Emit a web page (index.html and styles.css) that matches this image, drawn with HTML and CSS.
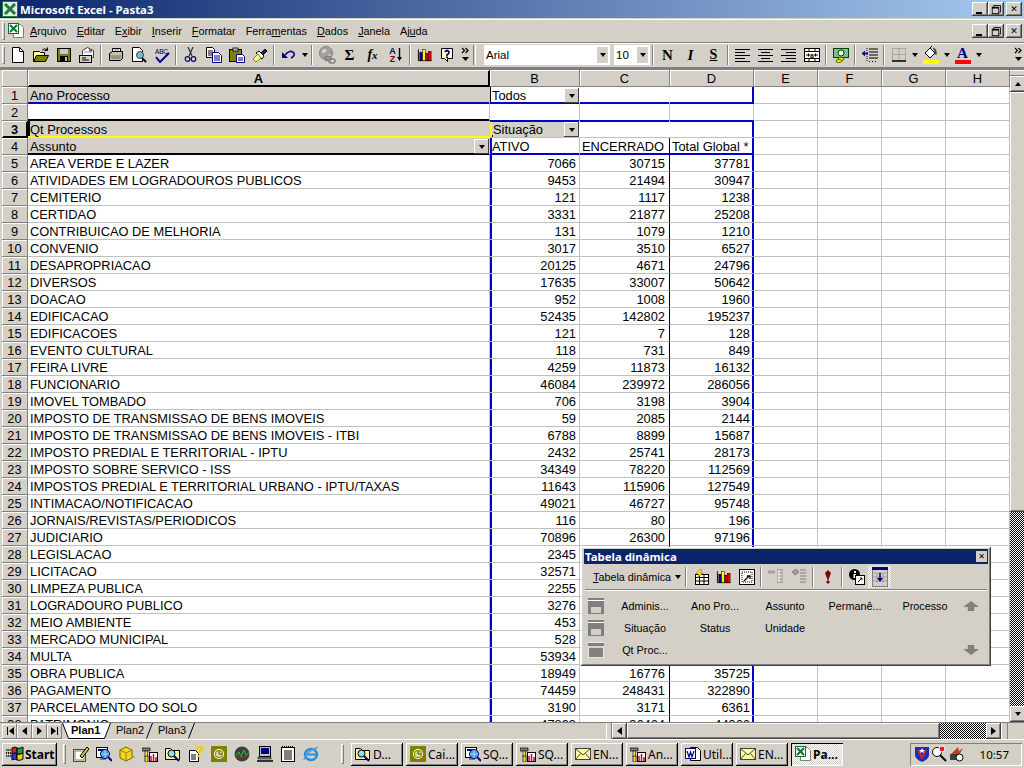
FILE: index.html
```html
<!DOCTYPE html>
<html lang="pt">
<head>
<meta charset="utf-8">
<title>Microsoft Excel - Pasta3</title>
<link rel="stylesheet" href="styles.css">
</head>
<body>
<svg class="sprite" aria-hidden="true">
<defs>
<symbol id="xl" viewBox="0 0 16 16"><rect width="16" height="16" fill="#1c7c3c"/><rect x="1" y="1" width="14" height="14" fill="#dfeee3"/><path d="M3 3l10 10M13 3L3 13" stroke="#1c7c3c" stroke-width="3"/></symbol>
<symbol id="xldoc" viewBox="0 0 16 16"><path d="M5.500 1.500h7l3 3v10h-10z" fill="#fff" stroke="#808080"/><rect x=".5" y=".5" width="10" height="10" fill="#fff" stroke="#107030"/><path d="M2 2l7 7M9 2L2 9" stroke="#107030" stroke-width="2"/></symbol>
<symbol id="new" viewBox="0 0 16 16"><path d="M2.500 .5h7l4 4v11h-11z" fill="#fff" stroke="#000"/><path d="M9.500 .5v4h4" fill="none" stroke="#000"/></symbol>
<symbol id="open" viewBox="0 0 16 16"><path d="M.5 4.500h6l1 1h4v9H.5z" fill="#ffff9c" stroke="#000"/><path d="M3.500 8.500h12l-3 6H.5z" fill="#808000" stroke="#000"/><path d="M9 3.500q2-3 5-1M14.500 .5v3h-3" fill="none" stroke="#000"/></symbol>
<symbol id="save" viewBox="0 0 16 16"><rect x="1.500" y="1.500" width="13" height="13" fill="#808000" stroke="#000"/><rect x="4" y="2" width="8" height="5" fill="#c8c8c8"/><rect x="4" y="9" width="8" height="5" fill="#000"/><rect x="9" y="10" width="2" height="4" fill="#c0c0c0"/></symbol>
<symbol id="mail" viewBox="0 0 16 16"><path d="M3.500 7.500v-4l5-3 6 3v7h-11z" fill="#fff" stroke="#404040"/><path d="M10 3.500h3" stroke="#e02020" stroke-width="2"/><path d="M5 5h8" stroke="#8080ff"/><rect x=".5" y="8.500" width="12" height="7" fill="#d4d0c8" stroke="#000"/><path d="M3 11h4M3 13h7" stroke="#000"/></symbol>
<symbol id="print" viewBox="0 0 16 16"><path d="M4.500 1.500h8v4h-8z" fill="#fff" stroke="#000"/><path d="M1.500 6.500l3-2h10v7l-2 2H1.500z" fill="#c0c0c0" stroke="#000"/><path d="M2 9h11" stroke="#808000"/><path d="M3 11h10" stroke="#606060"/><path d="M6 3h5" stroke="#808080"/></symbol>
<symbol id="prev" viewBox="0 0 16 16"><path d="M1.500 .5h7l3 3v11h-10z" fill="#fff" stroke="#000"/><circle cx="9" cy="8" r="3.500" fill="#70c0d0" stroke="#404040"/><path d="M11 11l4 4" stroke="#000" stroke-width="2"/></symbol>
<symbol id="spell" viewBox="0 0 16 16"><text x="1" y="6.500" class="svgt">ABC</text><path d="M2 10l4 5 9-9" fill="none" stroke="#000080" stroke-width="2"/></symbol>
<symbol id="cut" viewBox="0 0 16 16"><path d="M5 0l4 9M10 0L6 9" stroke="#202020" stroke-width="1.100"/><circle cx="4.500" cy="12" r="2.300" fill="none" stroke="#000080" stroke-width="1.200"/><circle cx="10.500" cy="12" r="2.300" fill="none" stroke="#000080" stroke-width="1.200"/></symbol>
<symbol id="copy" viewBox="0 0 16 16"><path d="M.5 .5h6l2 2v8h-8z" fill="#fff" stroke="#000"/><path d="M2 4h5M2 6h5M2 8h5" stroke="#000"/><path d="M6.500 5.500h6l3 3v7h-9z" fill="#fff" stroke="#000080"/><path d="M8 9h6M8 11h6M8 13h6" stroke="#000080"/></symbol>
<symbol id="paste" viewBox="0 0 16 16"><rect x=".5" y="2.500" width="12" height="12" fill="#808000" stroke="#000"/><rect x="4" y="1" width="5" height="3" fill="#c0c0c0" stroke="#000" stroke-width=".8"/><path d="M7.500 7.500h6l2 2v6h-8z" fill="#fff" stroke="#000080"/><path d="M9 11h5M9 13h5" stroke="#000080"/></symbol>
<symbol id="paint" viewBox="0 0 16 16"><path d="M9 6l4-4 2 2-4 4z" fill="#202060" stroke="#000"/><path d="M4 6l3-2 5 5-2 3z" fill="#fff" stroke="#000"/><path d="M6 7l-5 5 3 3 5-4z" fill="#ffffa0" stroke="#808000"/></symbol>
<symbol id="undo" viewBox="0 0 16 16"><path d="M4 8q5-6 9-2 1 3-3 5" fill="none" stroke="#000080" stroke-width="1.600"/><path d="M1 5l0 6 6 0z" fill="#000080"/></symbol>
<symbol id="web" viewBox="0 0 18 18"><circle cx="8" cy="7" r="6.500" fill="#a0a0a0" stroke="#808080"/><path d="M4 4q3-2 5 0l-2 3-3 0zM10 8l3 1-2 3z" fill="#d4d0c8"/><rect x="7" y="10.500" width="6" height="4" rx="2" fill="none" stroke="#808080" stroke-width="1.500"/><rect x="11" y="13" width="6" height="4" rx="2" fill="none" stroke="#808080" stroke-width="1.500"/></symbol>
<symbol id="down" viewBox="0 0 5 16"><path d="M2.500 1v10" stroke="#000" stroke-width="1.400"/><path d="M0 10h5l-2.500 4z" fill="#000"/></symbol>
<symbol id="chart" viewBox="0 0 17 16"><path d="M1.500 2v12h14" fill="none" stroke="#000"/><rect x="3" y="5" width="3" height="9" fill="#000080" stroke="#000" stroke-width=".5"/><rect x="6" y="2" width="3" height="12" fill="#ff0" stroke="#000" stroke-width=".5"/><rect x="9" y="6" width="3" height="8" fill="#c00000" stroke="#000" stroke-width=".5"/><rect x="12" y="4" width="3" height="10" fill="#e00000" stroke="#000" stroke-width=".5"/></symbol>
<symbol id="help" viewBox="0 0 16 16"><path d="M1.500 1.500h11v10h-5v3l-3-3h-3z" fill="#ffffc0" stroke="#000"/><path d="M5 5q2-3 4 0 0 2-2 3v1" fill="none" stroke="#000080" stroke-width="1.800"/><rect x="6" y="9.500" width="2" height="1.500" fill="#000080"/></symbol>
<symbol id="chev" viewBox="0 0 9 16"><path d="M1 1l2.500 2.500L1 6M4.500 1L7 3.500 4.500 6" fill="none" stroke="#000" stroke-width="1.200"/><path d="M1 10h7l-3.500 4z" fill="#000"/></symbol>
<symbol id="al" viewBox="0 0 15 13"><path d="M0 .5h15M0 3.500h10M0 6.500h15M0 9.500h10M0 12.500h15" stroke="#000"/></symbol>
<symbol id="ac" viewBox="0 0 15 13"><path d="M0 .5h15M3 3.500h9M0 6.500h15M3 9.500h9M0 12.500h15" stroke="#000"/></symbol>
<symbol id="ar" viewBox="0 0 15 13"><path d="M0 .5h15M5 3.500h10M0 6.500h15M5 9.500h10M0 12.500h15" stroke="#000"/></symbol>
<symbol id="merge" viewBox="0 0 16 16"><rect x=".5" y="1.500" width="15" height="13" fill="#fff" stroke="#000"/><path d="M.5 4.500h15M.5 11.500h15M5 1.500v3M11 1.500v3M5 11.500v3M11 11.500v3" stroke="#000"/><path d="M2 8h2M12 8h2" stroke="#000"/><path d="M4 6v4l2-2zM12 6v4l-2-2z" fill="#000"/><text x="8" y="10.500" class="svga">a</text></symbol>
<symbol id="money" viewBox="0 0 16 16"><rect x=".5" y="1.500" width="15" height="9" fill="#7fbf8f" stroke="#004000"/><circle cx="8" cy="6" r="3" fill="#fff" stroke="#004000"/><ellipse cx="8" cy="12" rx="3" ry="1.500" fill="#ff0" stroke="#606000"/><ellipse cx="6" cy="14" rx="3" ry="1.500" fill="#ff0" stroke="#606000"/></symbol>
<symbol id="indent" viewBox="0 0 16 16"><path d="M7 2h9M7 5h9M7 8h9M7 11h9" stroke="#000"/><path d="M7 14.500h1M10 14.500h1M13 14.500h1" stroke="#000"/><path d="M5 1v14" stroke="#000" stroke-dasharray="1 1"/><path d="M0 6.500h6" stroke="#000080" stroke-width="1.500"/><path d="M3 3.500L0 6.500l3 3z" fill="#000080"/></symbol>
<symbol id="border" viewBox="0 0 14 14"><path d="M.5 .5h13v12h-13zM7 .5v12M.5 6.500h13" fill="none" stroke="#808080" stroke-dasharray="1 1"/><path d="M0 13h14" stroke="#000" stroke-width="1.500"/></symbol>
<symbol id="fill" viewBox="0 0 16 16"><path d="M2 7l5-5 5 5-5 5z" fill="#fff" stroke="#000"/><path d="M7 2l2-2" stroke="#000"/><path d="M10 2q4 1 3 7" fill="#404040" stroke="#404040"/></symbol>
<symbol id="pvwiz" viewBox="0 0 16 16"><rect x="2.500" y="5.500" width="13" height="10" fill="#fff" stroke="#000"/><path d="M2.500 8.500h13M2.500 12h13M6.500 5.500v10M11 5.500v10" stroke="#000"/><path d="M7 0L3 5h3L4 9l6-5H7l2-4z" fill="#ff0" stroke="#806000" stroke-width=".6"/></symbol>
<symbol id="pvbox" viewBox="0 0 16 16"><rect x=".5" y=".5" width="15" height="15" fill="#fff" stroke="#000"/><rect x="3" y="3" width="10" height="10" fill="#fff" stroke="#000" stroke-dasharray="1 1"/><path d="M5 12l5-5M8 7h3v3" fill="none" stroke="#000" stroke-width="1.300"/></symbol>
<symbol id="pvg1" viewBox="0 0 16 16"><path d="M0 3h7" stroke="#a0a0a0" stroke-width="3"/><path d="M9 1h6M9 4h6M9 7h6M9 10h6M9 13h6" stroke="#808080"/><path d="M11 1v12" stroke="#fff"/></symbol>
<symbol id="pvg2" viewBox="0 0 16 16"><path d="M1 3l4-3 3 3-4 3z" fill="#a0a0a0" stroke="#808080"/><path d="M9 1h6M9 4h6M9 7h6M9 10h6M9 13h6" stroke="#808080"/></symbol>
<symbol id="bang" viewBox="0 0 8 16"><path d="M4 1l3 3-1.500 4L4 12 2.500 8 1 4z" fill="#800000"/><path d="M4 11l2 2-2 2-2-2z" fill="#800000"/></symbol>
<symbol id="pvinfo" viewBox="0 0 16 16"><circle cx="5.500" cy="5.500" r="5.500" fill="#000"/><rect x="5" y="2" width="2" height="2" fill="#fff"/><rect x="4.500" y="5" width="2.500" height="4" fill="#fff"/><rect x="6.500" y="6.500" width="9" height="9" fill="#fff" stroke="#000"/><path d="M9 13l4-4M11 9h2v2" fill="none" stroke="#000"/></symbol>
<symbol id="pvdoc" viewBox="0 0 16 20"><rect x=".5" y=".5" width="15" height="19" fill="#d4d0c8" stroke="#808080"/><rect x="0" y="0" width="16" height="3" fill="#000080"/><path d="M1 6h14M1 10h14M1 14h14M5 6v10M11 6v10" stroke="#a0a0a0"/><path d="M8 6v7" stroke="#000080" stroke-width="1.500"/><path d="M5 11h6l-3 4z" fill="#000080"/></symbol>
<symbol id="fpage" viewBox="0 0 16 16"><rect width="16" height="16" fill="#808080"/><rect y="2" width="16" height="1" fill="#fff"/><rect x="3" y="9" width="10" height="6" fill="#d4d0c8"/></symbol>
<symbol id="fdata" viewBox="0 0 16 16"><rect width="16" height="16" fill="#d4d0c8" stroke="#fff"/><rect y="1" width="16" height="3" fill="#808080"/><rect x="1" y="6" width="14" height="9" fill="#808080"/></symbol>
<symbol id="flag" viewBox="0 0 18 16"><path d="M0 3l1 9M2 3l1 9M4 3l1 9" stroke="#000" stroke-dasharray="2 1"/><path d="M6 2q3-2 5 0v6q-2-2-5 0z" fill="#e02020" stroke="#000"/><path d="M11 2q3 1 6-1v6q-3 2-6 1z" fill="#20a040" stroke="#000"/><path d="M6 8q3-2 5 0v6q-2-2-5 0z" fill="#2040e0" stroke="#000"/><path d="M11 8q3 1 6-1v6q-3 2-6 1z" fill="#f0d020" stroke="#000"/></symbol>
<symbol id="ql1" viewBox="0 0 16 16"><rect x=".5" y="3.500" width="12" height="12" fill="#ffeeb0" stroke="#006080"/><rect x="2" y="5" width="9" height="9" fill="#fff" stroke="#808080"/><path d="M7 10L14 1l2 2-7 9z" fill="#e0c040" stroke="#000"/></symbol>
<symbol id="sql" viewBox="0 0 16 16"><rect x=".5" y="1.500" width="11" height="10" fill="#fff" stroke="#000"/><rect x="2" y="3" width="8" height="2" fill="#000080"/><rect x="4" y="12" width="6" height="2" fill="#808080"/><circle cx="9" cy="8" r="4.500" fill="#40a0e0" stroke="#000080"/><path d="M5 8h8M9 4v8" stroke="#a0e0ff"/><path d="M12 11l4 4" stroke="#000080" stroke-width="2"/></symbol>
<symbol id="cube" viewBox="0 0 16 16"><path d="M1 4l6-3 6 3v8l-6 3-6-3z" fill="#f0d820" stroke="#806000"/><path d="M1 4l6 3 6-3M7 7v8" fill="none" stroke="#a08000"/><path d="M14 11h2" stroke="#808080"/></symbol>
<symbol id="hammer" viewBox="0 0 16 16"><path d="M0 2h8v3H0z" fill="#808080" stroke="#000" stroke-width=".7"/><rect x="3" y="5" width="2.500" height="6" fill="#ffe060" stroke="#000" stroke-width=".6"/><rect x="3" y="10" width="3" height="6" fill="#ffe000" stroke="#000" stroke-width=".7"/><rect x="7.500" y="6.500" width="8" height="9" fill="#fff" stroke="#000"/><path d="M9 15V10M11.500 15V8M14 15v-4" stroke="#c00040" stroke-width="1.500"/></symbol>
<symbol id="find" viewBox="0 0 16 16"><path d="M.5 2.500h5l2 2h7v9h-14z" fill="#ffeeb0" stroke="#000"/><circle cx="6.500" cy="7.500" r="3.500" fill="#90e0f0" stroke="#000"/><path d="M9 10l5 5" stroke="#000080" stroke-width="2"/></symbol>
<symbol id="qhelp" viewBox="0 0 16 16"><path d="M1.500 4.500h6l3 3v8h-9z" fill="#fff" stroke="#000"/><path d="M3 9h5M3 11h5M3 13h5" stroke="#000"/><path d="M8 3q3-4 6-1 1 2-2 4l-1 2" fill="none" stroke="#f0d000" stroke-width="2.500"/><rect x="9.500" y="9" width="2.500" height="2" fill="#f0d000"/></symbol>
<symbol id="clock" viewBox="0 0 16 16"><rect width="16" height="16" fill="#808000"/><circle cx="8" cy="8" r="5" fill="#fff"/><circle cx="8" cy="8" r="4" fill="#808000"/><circle cx="8" cy="8" r="3" fill="#dfe0a0"/><path d="M8 5v3h3" fill="none" stroke="#404000"/></symbol>
<symbol id="globe" viewBox="0 0 16 16"><circle cx="8" cy="8" r="7.500" fill="#404040"/><path d="M2 9l3-3 2 5 3-7 2 5 3-2" fill="none" stroke="#20c040"/><path d="M2 11l4-2 2 3 5-3" fill="none" stroke="#e02020"/></symbol>
<symbol id="pc" viewBox="0 0 16 16"><rect x="2.500" y=".5" width="11" height="10" fill="#c0c0c0" stroke="#000"/><rect x="4" y="2" width="8" height="6" fill="#000080"/><rect x="1" y="11" width="13" height="2" fill="#808080" stroke="#000" stroke-width=".5"/><path d="M0 15h16" stroke="#000" stroke-width="1.500"/></symbol>
<symbol id="note" viewBox="0 0 14 16"><rect x=".5" y="1.500" width="13" height="14" fill="#fff" stroke="#000"/><path d="M1 .5h12" stroke="#000" stroke-dasharray="1 1"/><path d="M3 5h8M3 7h8M3 9h8M3 11h8M3 13h8" stroke="#000"/></symbol>
<symbol id="ie" viewBox="0 0 16 16"><ellipse cx="8" cy="8.500" rx="6" ry="5.500" fill="none" stroke="#2090e0" stroke-width="2.500"/><path d="M3 8.500h10" stroke="#2090e0" stroke-width="2"/><path d="M1 14q1-8 14-13" fill="none" stroke="#60a0d0" stroke-width="1.500"/></symbol>
<symbol id="env" viewBox="0 0 16 12"><rect x=".5" y=".5" width="15" height="11" fill="#ffffa0" stroke="#404040"/><path d="M.5 .5L8 7l7.500-6.500M.5 11.500l5-6M15.500 11.500l-5-6" fill="none" stroke="#404040"/></symbol>
<symbol id="word" viewBox="0 0 16 16"><path d="M5.500 1.500h7l3 3v10h-10z" fill="#fff" stroke="#000"/><rect x=".5" y="2.500" width="10" height="10" fill="#fff" stroke="#000080"/><path d="M2 5l2 6 1.500-5 1.500 5 2-6" fill="none" stroke="#000080" stroke-width="1.200"/></symbol>
<symbol id="shield" viewBox="0 0 16 16"><path d="M1 1h14v8q0 4-7 7-7-3-7-7z" fill="#1030c0"/><path d="M4 4l4 8 4-8" fill="none" stroke="#e02020" stroke-width="2"/><path d="M8 2l1 2 2 0-1.500 1.500L10 7 8 6 6 7l.5-1.500L5 4h2z" fill="#fff"/></symbol>
<symbol id="lens" viewBox="0 0 16 16"><circle cx="6" cy="6" r="4.500" fill="#fff" stroke="#000"/><circle cx="11" cy="3" r="3" fill="#e02020" stroke="#fff"/><path d="M9 9l6 6" stroke="#000" stroke-width="2"/></symbol>
<symbol id="tray3" viewBox="0 0 16 16"><path d="M2 9l8-8 1 4 4-3-4 7z" fill="#c04020"/><rect x="2" y="8" width="8" height="6" fill="#404040"/><circle cx="11.500" cy="11.500" r="3.500" fill="#fff" stroke="#000"/></symbol>
<symbol id="tabon" viewBox="0 0 49 16" preserveAspectRatio="none"><path d="M.5 0l6 15.500h36L48.500 0" fill="#fff" stroke="#000"/></symbol>
<symbol id="slash" viewBox="0 0 7 16"><path d="M6.500 0L.5 15.500" stroke="#000" fill="none"/></symbol>
</defs>
</svg>

<div class="app">
  <header class="title">
    <svg class="ic16"><use href="#xl"/></svg>
    <span class="title-text">Microsoft Excel - Pasta3</span>
    <span class="winbtns">
      <button class="wb"><i class="g-min"></i></button>
      <button class="wb"><i class="g-res"></i></button>
      <button class="wb wb-x">✕</button>
    </span>
  </header>

  <nav class="menubar">
    <i class="grip"></i>
    <svg class="ic16 menu-doc"><use href="#xldoc"/></svg>
    <ul class="menu">
      <li><u>A</u>rquivo</li><li><u>E</u>ditar</li><li>E<u>x</u>ibir</li><li><u>I</u>nserir</li><li><u>F</u>ormatar</li><li>Ferra<u>m</u>entas</li><li><u>D</u>ados</li><li><u>J</u>anela</li><li>Aj<u>u</u>da</li>
    </ul>
    <span class="winbtns">
      <button class="wb"><i class="g-min"></i></button>
      <button class="wb"><i class="g-res"></i></button>
      <button class="wb wb-x">✕</button>
    </span>
  </nav>

  <div class="toolbar">
    <i class="grip"></i>
    <b class="tb"><svg class="ic16"><use href="#new"/></svg></b>
    <b class="tb"><svg class="ic16"><use href="#open"/></svg></b>
    <b class="tb"><svg class="ic16"><use href="#save"/></svg></b>
    <b class="tb"><svg class="ic16"><use href="#mail"/></svg></b>
    <i class="sep"></i>
    <b class="tb"><svg class="ic16"><use href="#print"/></svg></b>
    <b class="tb"><svg class="ic16"><use href="#prev"/></svg></b>
    <b class="tb"><svg class="ic16"><use href="#spell"/></svg></b>
    <i class="sep"></i>
    <b class="tb"><svg class="ic16"><use href="#cut"/></svg></b>
    <b class="tb"><svg class="ic16"><use href="#copy"/></svg></b>
    <b class="tb"><svg class="ic16"><use href="#paste"/></svg></b>
    <b class="tb"><svg class="ic16"><use href="#paint"/></svg></b>
    <i class="sep"></i>
    <b class="tb"><svg class="ic16"><use href="#undo"/></svg></b><b class="tbd"><i class="arr"></i></b>
    <i class="sep"></i>
    <b class="tb"><svg class="ic18"><use href="#web"/></svg></b>
    <b class="tb tb-sym">Σ</b>
    <b class="tb tb-fx"><em>f</em><em class="x">x</em></b>
    <b class="tb tb-az"><span class="az"><span class="a">A</span><span class="z">Z</span></span><svg class="down"><use href="#down"/></svg></b>
    <i class="sep"></i>
    <b class="tb"><svg class="ic16"><use href="#chart"/></svg></b>
    <b class="tb"><svg class="ic16"><use href="#help"/></svg></b>
    <b class="tb-chev"><svg class="chev"><use href="#chev"/></svg></b>
    <i class="sep sep-dbl"></i>
    <span class="combo combo-font"><span>Arial</span><i class="cbtn"><i class="arr"></i></i></span>
    <span class="combo combo-size"><span>10</span><i class="cbtn"><i class="arr"></i></i></span>
    <i class="sep"></i>
    <b class="tb tb-n">N</b>
    <b class="tb tb-i">I</b>
    <b class="tb tb-s">S</b>
    <i class="sep"></i>
    <b class="tb"><svg class="icl"><use href="#al"/></svg></b>
    <b class="tb"><svg class="icl"><use href="#ac"/></svg></b>
    <b class="tb"><svg class="icl"><use href="#ar"/></svg></b>
    <b class="tb"><svg class="ic16"><use href="#merge"/></svg></b>
    <i class="sep"></i>
    <b class="tb"><svg class="ic16"><use href="#money"/></svg></b>
    <i class="sep"></i>
    <b class="tb"><svg class="ic16"><use href="#indent"/></svg></b>
    <i class="sep"></i>
    <b class="tb"><svg class="ic14"><use href="#border"/></svg></b><b class="tbd"><i class="arr"></i></b>
    <b class="tb tb-col"><svg class="ic16"><use href="#fill"/></svg><i class="bar bar-y"></i></b><b class="tbd"><i class="arr"></i></b>
    <b class="tb tb-col"><span class="fc">A</span><i class="bar bar-r"></i></b><b class="tbd"><i class="arr"></i></b>
    <b class="tb-chev tb-chev-end"><svg class="chev"><use href="#chev"/></svg></b>
  </div>

  <main class="sheet">
    <div class="gridwrap">
      <table class="grid">
        <colgroup><col class="c0"><col class="ca"><col class="cb"><col class="cc"><col class="cd"><col class="ce"><col class="ce"><col class="ce"><col class="ch"></colgroup>
        <thead><tr><th class="corner"></th><th class="sel">A</th><th>B</th><th>C</th><th>D</th><th>E</th><th>F</th><th>G</th><th>H</th></tr></thead>
        <tbody>
<tr><th>1</th><td class="g bb">Ano Processo</td><td class="bb kl wr"><div class="pf">Todos<i class="dd"><i class="arr"></i></i></div></td><td class="bb wr"></td><td class="bb br"></td><td></td><td></td><td></td><td></td></tr>
<tr><th>2</th><td class="blk"></td><td class="bb1"></td><td class="bb1"></td><td class="bb1"></td><td></td><td></td><td></td><td></td></tr>
<tr><th class="sel">3</th><td class="g act">Qt Processos</td><td class="g2 yl bt wr"><div class="pf pf-s">Situação<i class="dd"><i class="arr"></i></i></div></td><td class="bt wr"></td><td class="bt br"></td><td></td><td></td><td></td><td></td></tr>
<tr><th>4</th><td class="g blk"><div class="pf">Assunto<i class="dd"><i class="arr"></i></i></div></td><td class="bl bb">ATIVO</td><td class="bb kr">ENCERRADO</td><td class="bb br">Total Global *</td><td></td><td></td><td></td><td></td></tr>
<tr><th>5</th><td>AREA VERDE E LAZER</td><td class="bl n">7066</td><td class="n kr">30715</td><td class="n br">37781</td><td></td><td></td><td></td><td></td></tr>
<tr><th>6</th><td>ATIVIDADES EM LOGRADOUROS PUBLICOS</td><td class="bl n">9453</td><td class="n kr">21494</td><td class="n br">30947</td><td></td><td></td><td></td><td></td></tr>
<tr><th>7</th><td>CEMITERIO</td><td class="bl n">121</td><td class="n kr">1117</td><td class="n br">1238</td><td></td><td></td><td></td><td></td></tr>
<tr><th>8</th><td>CERTIDAO</td><td class="bl n">3331</td><td class="n kr">21877</td><td class="n br">25208</td><td></td><td></td><td></td><td></td></tr>
<tr><th>9</th><td>CONTRIBUICAO DE MELHORIA</td><td class="bl n">131</td><td class="n kr">1079</td><td class="n br">1210</td><td></td><td></td><td></td><td></td></tr>
<tr><th>10</th><td>CONVENIO</td><td class="bl n">3017</td><td class="n kr">3510</td><td class="n br">6527</td><td></td><td></td><td></td><td></td></tr>
<tr><th>11</th><td>DESAPROPRIACAO</td><td class="bl n">20125</td><td class="n kr">4671</td><td class="n br">24796</td><td></td><td></td><td></td><td></td></tr>
<tr><th>12</th><td>DIVERSOS</td><td class="bl n">17635</td><td class="n kr">33007</td><td class="n br">50642</td><td></td><td></td><td></td><td></td></tr>
<tr><th>13</th><td>DOACAO</td><td class="bl n">952</td><td class="n kr">1008</td><td class="n br">1960</td><td></td><td></td><td></td><td></td></tr>
<tr><th>14</th><td>EDIFICACAO</td><td class="bl n">52435</td><td class="n kr">142802</td><td class="n br">195237</td><td></td><td></td><td></td><td></td></tr>
<tr><th>15</th><td>EDIFICACOES</td><td class="bl n">121</td><td class="n kr">7</td><td class="n br">128</td><td></td><td></td><td></td><td></td></tr>
<tr><th>16</th><td>EVENTO CULTURAL</td><td class="bl n">118</td><td class="n kr">731</td><td class="n br">849</td><td></td><td></td><td></td><td></td></tr>
<tr><th>17</th><td>FEIRA LIVRE</td><td class="bl n">4259</td><td class="n kr">11873</td><td class="n br">16132</td><td></td><td></td><td></td><td></td></tr>
<tr><th>18</th><td>FUNCIONARIO</td><td class="bl n">46084</td><td class="n kr">239972</td><td class="n br">286056</td><td></td><td></td><td></td><td></td></tr>
<tr><th>19</th><td>IMOVEL TOMBADO</td><td class="bl n">706</td><td class="n kr">3198</td><td class="n br">3904</td><td></td><td></td><td></td><td></td></tr>
<tr><th>20</th><td>IMPOSTO DE TRANSMISSAO DE BENS IMOVEIS</td><td class="bl n">59</td><td class="n kr">2085</td><td class="n br">2144</td><td></td><td></td><td></td><td></td></tr>
<tr><th>21</th><td>IMPOSTO DE TRANSMISSAO DE BENS IMOVEIS - ITBI</td><td class="bl n">6788</td><td class="n kr">8899</td><td class="n br">15687</td><td></td><td></td><td></td><td></td></tr>
<tr><th>22</th><td>IMPOSTO PREDIAL E TERRITORIAL - IPTU</td><td class="bl n">2432</td><td class="n kr">25741</td><td class="n br">28173</td><td></td><td></td><td></td><td></td></tr>
<tr><th>23</th><td>IMPOSTO SOBRE SERVICO - ISS</td><td class="bl n">34349</td><td class="n kr">78220</td><td class="n br">112569</td><td></td><td></td><td></td><td></td></tr>
<tr><th>24</th><td>IMPOSTOS PREDIAL E TERRITORIAL URBANO - IPTU/TAXAS</td><td class="bl n">11643</td><td class="n kr">115906</td><td class="n br">127549</td><td></td><td></td><td></td><td></td></tr>
<tr><th>25</th><td>INTIMACAO/NOTIFICACAO</td><td class="bl n">49021</td><td class="n kr">46727</td><td class="n br">95748</td><td></td><td></td><td></td><td></td></tr>
<tr><th>26</th><td>JORNAIS/REVISTAS/PERIODICOS</td><td class="bl n">116</td><td class="n kr">80</td><td class="n br">196</td><td></td><td></td><td></td><td></td></tr>
<tr><th>27</th><td>JUDICIARIO</td><td class="bl n">70896</td><td class="n kr">26300</td><td class="n br">97196</td><td></td><td></td><td></td><td></td></tr>
<tr><th>28</th><td>LEGISLACAO</td><td class="bl n">2345</td><td class="n kr"></td><td class="n br"></td><td></td><td></td><td></td><td></td></tr>
<tr><th>29</th><td>LICITACAO</td><td class="bl n">32571</td><td class="n kr"></td><td class="n br"></td><td></td><td></td><td></td><td></td></tr>
<tr><th>30</th><td>LIMPEZA PUBLICA</td><td class="bl n">2255</td><td class="n kr"></td><td class="n br"></td><td></td><td></td><td></td><td></td></tr>
<tr><th>31</th><td>LOGRADOURO PUBLICO</td><td class="bl n">3276</td><td class="n kr"></td><td class="n br"></td><td></td><td></td><td></td><td></td></tr>
<tr><th>32</th><td>MEIO AMBIENTE</td><td class="bl n">453</td><td class="n kr"></td><td class="n br"></td><td></td><td></td><td></td><td></td></tr>
<tr><th>33</th><td>MERCADO MUNICIPAL</td><td class="bl n">528</td><td class="n kr"></td><td class="n br"></td><td></td><td></td><td></td><td></td></tr>
<tr><th>34</th><td>MULTA</td><td class="bl n">53934</td><td class="n kr"></td><td class="n br"></td><td></td><td></td><td></td><td></td></tr>
<tr><th>35</th><td>OBRA PUBLICA</td><td class="bl n">18949</td><td class="n kr">16776</td><td class="n br">35725</td><td></td><td></td><td></td><td></td></tr>
<tr><th>36</th><td>PAGAMENTO</td><td class="bl n">74459</td><td class="n kr">248431</td><td class="n br">322890</td><td></td><td></td><td></td><td></td></tr>
<tr><th>37</th><td>PARCELAMENTO DO SOLO</td><td class="bl n">3190</td><td class="n kr">3171</td><td class="n br">6361</td><td></td><td></td><td></td><td></td></tr>
<tr><th>38</th><td>PATRIMONIO</td><td class="bl n">47893</td><td class="n kr">36464</td><td class="n br">44366</td><td></td><td></td><td></td><td></td></tr>
        </tbody>
      </table>
      <div class="vscroll">
        <i class="vsplit"></i>
        <b class="sb"><i class="arr arr-up"></i></b>
        <i class="vthumb"></i>
        <i class="dither"></i>
        <b class="sb"><i class="arr"></i></b>
      </div>
    </div>
    <div class="tabbar">
      <span class="tabnav">
        <b class="tn"><i class="bar-l"></i><i class="arr-l"></i></b>
        <b class="tn"><i class="arr-l"></i></b>
        <b class="tn"><i class="arr-r"></i></b>
        <b class="tn"><i class="arr-r"></i><i class="bar-l"></i></b>
      </span>
      <span class="tabs">
        <span class="tab on"><svg class="tab-bg"><use href="#tabon"/></svg><span class="tab-t">Plan1</span></span>
        <span class="tab"><span class="tab-t">Plan2</span><svg class="slash"><use href="#slash"/></svg></span>
        <span class="tab"><span class="tab-t">Plan3</span><svg class="slash"><use href="#slash"/></svg></span>
      </span>
      <span class="hscroll">
        <i class="hsplit"></i>
        <b class="sb"><i class="arr-l"></i></b>
        <i class="hthumb"></i>
        <i class="dither"></i>
        <b class="sb"><i class="arr-r"></i></b>
        <i class="hsplit hsplit-r"></i>
      </span>
    </div>
  </main>

  <footer class="taskbar">
    <b class="start"><svg class="flag"><use href="#flag"/></svg>Start</b>
    <i class="tgrip"></i>
    <span class="quick">
      <svg class="ic16"><use href="#ql1"/></svg>
      <svg class="ic16"><use href="#sql"/></svg>
      <svg class="ic16"><use href="#cube"/></svg>
      <svg class="ic16"><use href="#hammer"/></svg>
      <svg class="ic16"><use href="#find"/></svg>
      <svg class="ic16"><use href="#qhelp"/></svg>
      <svg class="ic16"><use href="#clock"/></svg>
      <svg class="ic16"><use href="#globe"/></svg>
      <svg class="ic16"><use href="#pc"/></svg>
      <svg class="ic16"><use href="#note"/></svg>
      <svg class="ic16"><use href="#ie"/></svg>
    </span>
    <i class="tgrip"></i>
    <span class="tasks">
      <b class="task"><svg class="ic16"><use href="#find"/></svg>D...</b>
      <b class="task"><svg class="ic16"><use href="#clock"/></svg>Cai...</b>
      <b class="task"><svg class="ic16"><use href="#sql"/></svg>SQ...</b>
      <b class="task"><svg class="ic16"><use href="#hammer"/></svg>SQ...</b>
      <b class="task"><svg class="ic-env"><use href="#env"/></svg>EN...</b>
      <b class="task"><svg class="ic16"><use href="#hammer"/></svg>An...</b>
      <b class="task"><svg class="ic16"><use href="#word"/></svg>Util...</b>
      <b class="task"><svg class="ic-env"><use href="#env"/></svg>EN...</b>
      <b class="task task-on"><svg class="ic16"><use href="#xldoc"/></svg>Pa...</b>
    </span>
    <span class="tray">
      <svg class="ic16"><use href="#shield"/></svg>
      <svg class="ic16"><use href="#lens"/></svg>
      <svg class="ic16"><use href="#tray3"/></svg>
      <span class="clock">10:57</span>
    </span>
  </footer>

  <aside class="palette">
    <div class="pal-title"><span>Tabela dinâmica</span><b class="pal-x">✕</b></div>
    <div class="pal-tools">
      <span class="pal-menu"><span><u>T</u>abela dinâmica</span><i class="arr"></i></span>
      <i class="sep"></i>
      <b class="tb"><svg class="ic16"><use href="#pvwiz"/></svg></b>
      <b class="tb"><svg class="ic16"><use href="#chart"/></svg></b>
      <b class="tb"><svg class="ic16"><use href="#pvbox"/></svg></b>
      <i class="sep"></i>
      <b class="tb"><svg class="ic16"><use href="#pvg1"/></svg></b>
      <b class="tb"><svg class="ic16"><use href="#pvg2"/></svg></b>
      <i class="sep"></i>
      <b class="tb"><svg class="bang"><use href="#bang"/></svg></b>
      <i class="sep"></i>
      <b class="tb"><svg class="ic16"><use href="#pvinfo"/></svg></b>
      <b class="tb tb-press"><svg class="ic-doc"><use href="#pvdoc"/></svg></b>
    </div>
    <div class="pal-fields">
      <svg class="ic16"><use href="#fpage"/></svg><span>Adminis...</span><span>Ano Pro...</span><span>Assunto</span><span>Permanê...</span><span>Processo</span><i class="tri tri-up"></i>
      <svg class="ic16"><use href="#fpage"/></svg><span>Situação</span><span>Status</span><span>Unidade</span><span></span><span></span><i></i>
      <svg class="ic16"><use href="#fdata"/></svg><span>Qt Proc...</span><span></span><span></span><span></span><span></span><i class="tri tri-down"></i>
    </div>
  </aside>
</div>
</body>
</html>
```
FILE: styles.css
```css
* { box-sizing: border-box; }
html, body { margin: 0; padding: 0; }
body { font-family: "Liberation Sans", Arial, sans-serif; background: #d4d0c8; color: #000; overflow: hidden; }
.sprite { position: absolute; width: 0; height: 0; }
b, i, em { font-style: normal; font-weight: normal; }
svg { display: block; flex: none; }
.svgt { font: 6.500px "Liberation Sans", sans-serif; fill: #000; letter-spacing: -.2px; }
.svga { font: bold 7px "Liberation Sans", sans-serif; fill: #000; text-anchor: middle; }
.ic16 { width: 16px; height: 16px; }
.ic18 { width: 18px; height: 18px; }
.ic14 { width: 14px; height: 14px; }
.icl { width: 15px; height: 13px; }
.ic-env { width: 16px; height: 12px; }
.ic-doc { width: 16px; height: 20px; }
.bang { width: 8px; height: 16px; }
.chev { width: 9px; height: 16px; }
.down { width: 5px; height: 16px; }
.flag { width: 18px; height: 16px; }

.app { position: relative; width: 1024px; height: 768px; display: flex; flex-direction: column; overflow: hidden; }

/* title */
.title { height: 18px; display: flex; align-items: center; gap: 2px; padding: 0 2px; background: linear-gradient(90deg, #0a246a, #a6caf0); color: #fff; font: bold 11.400px "Noto Sans", sans-serif; flex: none; }
.title-text { flex: 1; }
.winbtns { display: flex; align-items: center; }
.wb { width: 16px; height: 14px; padding: 0; border: 0; background: #d4d0c8; box-shadow: inset -1px -1px #404040, inset 1px 1px #fff, inset -2px -2px #808080; display: flex; align-items: center; justify-content: center; color: #000; font: bold 9px "DejaVu Sans", sans-serif; position: relative; }
.wb-x { margin-left: 2px; }
.g-min { width: 6px; height: 2px; background: #000; margin-top: 7px; margin-right: 2px; }
.g-res { width: 9px; height: 9px; border: 1px solid #000; border-top-width: 2px; background: #d4d0c8; box-shadow: 2px -2px 0 -1px #d4d0c8, 2px -2px 0 0 #000; transform: translate(-1px, 1px) scale(.82); }

/* menu */
.menubar { height: 23px; margin-top: 1px; border-top: 1px solid #fff; display: flex; align-items: center; padding: 0 2px; font: 10.800px "Liberation Sans", sans-serif; flex: none; }
.grip { width: 3px; height: 18px; background: #d4d0c8; border-top: 1px solid #fff; border-left: 1px solid #fff; border-right: 1px solid #808080; border-bottom: 1px solid #808080; flex: none; }
.menu-doc { margin-left: 3px; }
.menu { list-style: none; margin: 0 0 0 6px; padding: 0; display: flex; gap: 10px; flex: 1; }
.menu u { text-underline-offset: 1px; }

/* toolbar */
.toolbar { height: 28px; display: flex; align-items: center; padding: 0 0 0 2px; border-top: 1px solid #808080; box-shadow: inset 0 1px #fff; border-bottom: 3px solid #808080; flex: none; font-size: 11px; }
.toolbar .grip { margin-right: 1px; }
.tb { width: 23px; height: 22px; display: flex; align-items: center; justify-content: center; flex: none; }
.tbd { width: 9px; height: 22px; display: flex; align-items: center; justify-content: center; flex: none; }
.tb-chev { width: 12px; height: 22px; display: flex; align-items: center; justify-content: center; flex: none; }
.tb-chev-end { margin-left: auto; margin-right: 0; }
.sep { width: 2px; height: 20px; margin: 0 2px; border-left: 1px solid #808080; border-right: 1px solid #fff; flex: none; }
.sep-dbl { margin-right: 8px; width: 3px; }
.arr { display: block; width: 0; height: 0; border: 3.500px solid transparent; border-top: 4px solid #000; border-bottom: 0; }
.arr-up { border-top: 0; border-bottom: 4px solid #000; }
.arr-l { display: block; width: 0; height: 0; border: 4px solid transparent; border-right: 5px solid #000; border-left: 0; }
.arr-r { display: block; width: 0; height: 0; border: 4px solid transparent; border-left: 5px solid #000; border-right: 0; }
.tb-sym { font: bold 15px "Liberation Serif", serif; }
.tb-fx { font: italic bold 14px "Liberation Serif", serif; }
.tb-fx em { font-style: italic; font-weight: bold; }
.tb-fx .x { font-size: 11px; }
.tb-az { gap: 1px; }
.az { display: flex; flex-direction: column; align-items: center; font: bold 9px/8px "Liberation Sans", sans-serif; }
.az .a { color: #000080; }
.az .z { color: #800000; }
.combo { height: 20px; background: #fff; display: flex; align-items: center; justify-content: space-between; font: 11.500px "Liberation Sans", sans-serif; padding: 0 2px; flex: none; }
.combo-font { width: 126px; margin-right: 4px; }
.combo-size { width: 36px; }
.cbtn { width: 11px; height: 16px; background: #d4d0c8; display: flex; align-items: center; justify-content: center; }
.tb-n { font: bold 15px "Liberation Serif", serif; }
.tb-i { font: italic bold 15px "Liberation Serif", serif; }
.tb-s { font: bold 14px "Liberation Serif", serif; text-decoration: underline; }
.tb-col { flex-direction: column; gap: 0; }
.bar { display: block; width: 16px; height: 4px; }
.bar-y { background: #ff0; margin-top: -2px; }
.bar-r { background: #f00; }
.fc { font: bold 15px/14px "Liberation Serif", serif; color: #000080; }

/* sheet */
.sheet { flex: 1; min-height: 0; display: flex; flex-direction: column; }
.gridwrap { flex: 1; min-height: 0; display: flex; overflow: hidden; padding-left: 2px; background: #d4d0c8; }
.grid { width: 1006px; height: 652px; border-collapse: separate; border-spacing: 0; table-layout: fixed; font: 12.850px/15px "Liberation Sans", sans-serif; flex: none; background: #fff; }
.c0 { width: 26px; }
.ca { width: 462px; }
.cb { width: 90px; }
.cc { width: 90px; }
.cd { width: 84px; }
.ce { width: 64px; }
.ch { width: 64px; }
.grid tr { height: 17px; }
.grid th, .grid td { height: 17px; padding: 1px 2px 0; white-space: nowrap; overflow: hidden; border-right: 1px solid #c0c0c0; border-bottom: 1px solid #c0c0c0; }
.grid td { text-align: left; box-shadow: inset 0 1px var(--top, transparent), inset 0 -1px var(--bot, transparent), inset -1px 0 var(--rgt, transparent), inset 2px 0 var(--lft, transparent), inset 1px 0 var(--lf1, transparent); }
.grid th { background: #d4d0c8; font-weight: normal; text-align: center; border-right: 1px solid #808080; border-bottom: 1px solid #808080; box-shadow: inset 1px 1px #fff; }
.grid th.sel { font-weight: bold; box-shadow: inset 1px 1px #fff, inset -1px -1px #000; border-right-color: #000; border-bottom-color: #000; }
.grid td.g { background: #d4d0c8; border-color: transparent; }
.grid td.g2 { background: linear-gradient(#000, #000) 0 100% / 3px 2px no-repeat, #d4d0c8; }
.grid td.n { text-align: right; padding-right: 3px; }
.grid td.kr { border-right-color: #000; padding-right: 4px; }
.grid td.wr { border-right-color: #fff; }
.grid td.bb { border-bottom-color: #0000c8; --bot: #0000c8; }
.grid td.bb1 { border-bottom-color: #0000c8; }
.grid td.bt { --top: #0000c8; }
.grid td.br { border-right-color: #0000c8; --rgt: #0000c8; }
.grid td.bl { --lft: #0000c8; }
.grid td.kl { --lf1: #000; }
.grid td.blk { border-bottom-color: #000; --bot: #000; }
.grid td.act { --lft: #000; --bot: #ff0; border-bottom-color: #ff0; }
.grid td.yl { --lft: #ff0; }
.pf { display: flex; align-items: center; justify-content: space-between; height: 15px; margin-right: -2px; }
.pf-s { padding-left: 1px; }
.dd { width: 15px; height: 15px; background: #d4d0c8; display: flex; align-items: center; justify-content: center; box-shadow: inset -1px -1px #404040, inset 1px 1px #fff; flex: none; }

.vscroll { width: 16px; flex: none; height: 100%; display: flex; flex-direction: column; background: #d4d0c8; }
.vsplit { height: 6px; flex: none; border-top: 1px solid #fff; border-bottom: 1px solid #808080; }
.sb { width: 16px; height: 16px; flex: none; display: flex; align-items: center; justify-content: center; background: #d4d0c8; box-shadow: inset -1px -1px #404040, inset 1px 1px #fff, inset -2px -2px #808080; }
.vthumb { height: 420px; flex: none; box-shadow: inset -1px -1px #404040, inset 1px 1px #fff, inset -2px -2px #808080; }
.dither { flex: 1; background: repeating-conic-gradient(#000 0 25%, #fff 0 50%) 0 0 / 2px 2px; }

.tabbar { height: 17px; display: flex; align-items: center; background: #d4d0c8; border-top: 1px solid #808080; flex: none; }
.tabnav { display: flex; width: 62px; padding-left: 2px; flex: none; }
.tn { width: 15px; height: 15px; display: flex; align-items: center; justify-content: center; box-shadow: inset -1px -1px #808080, inset 1px 1px #fff; flex: none; }
.bar-l { width: 1px; height: 8px; background: #000; margin: 0 1px; }
.tabs { display: flex; font: 11px "Liberation Sans", sans-serif; width: 544px; flex: none; height: 16px; }
.tab { position: relative; width: 42px; height: 16px; line-height: 15px; padding-left: 5px; flex: none; }
.tab.on { width: 49px; padding-left: 9px; font-weight: bold; }
.tab-t { position: relative; }
.tab-bg { position: absolute; inset: 0; width: 49px; height: 16px; }
.slash { position: absolute; right: 0; top: 0; width: 7px; height: 16px; }
.hscroll { flex: none; width: 402px; display: flex; align-items: stretch; height: 16px; }
.hsplit { width: 6px; flex: none; box-shadow: inset -1px 0 #808080, inset 1px 0 #fff; }
.hsplit-r { width: 7px; }
.hscroll .sb { width: 15px; height: 16px; }
.hthumb { width: 313px; flex: none; box-shadow: inset -1px -1px #404040, inset 1px 1px #fff, inset -2px -2px #808080; }

/* taskbar */
.taskbar { height: 29px; border-top: 1px solid #fff; display: flex; align-items: center; padding: 0 2px; font: 12px "Noto Sans", sans-serif; flex: none; }
.start { width: 55px; height: 23px; display: flex; align-items: center; gap: 1px; padding-left: 4px; font: bold 12px "Noto Sans", sans-serif; box-shadow: inset -1px -1px #000, inset 1px 1px #fff, inset -2px -2px #808080; flex: none; }
.tgrip { width: 3px; height: 20px; margin: 0 4px 0 6px; border-top: 1px solid #fff; border-left: 1px solid #fff; border-right: 1px solid #808080; border-bottom: 1px solid #808080; flex: none; }
.quick { display: flex; gap: 7px; width: 262px; margin-left: 3px; flex: none; }
.tasks { display: flex; gap: 3px; margin-left: 3px; flex: none; }
.task { width: 52px; height: 23px; display: flex; align-items: center; gap: 2px; padding-left: 4px; box-shadow: inset -1px -1px #000, inset 1px 1px #fff, inset -2px -2px #808080; flex: none; overflow: hidden; }
.task-on { font-weight: bold; box-shadow: inset 1px 1px #000, inset -1px -1px #fff; background: repeating-conic-gradient(#fff 0 25%, #d4d0c8 0 50%) 0 0 / 2px 2px; }
.tray { margin-left: auto; width: 112px; height: 23px; display: flex; align-items: center; gap: 1px; padding-left: 4px; box-shadow: inset 1px 1px #808080, inset -1px -1px #fff; flex: none; font-size: 11.500px; }
.clock { margin-left: auto; margin-right: 13px; }

/* palette */
.palette { position: absolute; left: 581px; top: 547px; width: 410px; height: 119px; background: #d4d0c8; padding: 2px 3px; box-shadow: inset -1px -1px #404040, inset 1px 1px #fff, inset -2px -2px #808080; font: 10.800px "Liberation Sans", sans-serif; display: flex; flex-direction: column; }
.pal-title { height: 15px; background: #0a246a; color: #fff; font: bold 11.400px "Noto Sans", sans-serif; display: flex; align-items: center; justify-content: space-between; padding: 0 1px; flex: none; }
.pal-x { width: 11px; height: 11px; background: #d4d0c8; color: #000; font: 8px/11px "DejaVu Sans", sans-serif; text-align: center; }
.pal-tools { display: flex; align-items: center; height: 26px; padding-left: 8px; border-bottom: 1px solid #808080; box-shadow: 0 1px #fff; flex: none; margin: 0 1px; }
.pal-menu { width: 90px; display: flex; align-items: center; gap: 4px; flex: none; white-space: nowrap; }
.pal-tools .tb-press { background: repeating-conic-gradient(#fff 0 25%, #d4d0c8 0 50%) 0 0 / 2px 2px; }
.pal-fields { display: grid; grid-template-columns: 23px repeat(5, 70px) 22px; grid-auto-rows: 22px; align-items: center; justify-items: center; padding: 5px 0 0 3px; }
.pal-fields .ic16 { justify-self: start; margin-left: 1px; }
.tri { display: block; width: 16px; height: 10px; }
.tri-up { background: #808080; clip-path: polygon(50% 0, 100% 60%, 70% 60%, 70% 100%, 30% 100%, 30% 60%, 0 60%); }
.tri-down { background: #808080; clip-path: polygon(30% 0, 70% 0, 70% 40%, 100% 40%, 50% 100%, 0 40%, 30% 40%); }
```
